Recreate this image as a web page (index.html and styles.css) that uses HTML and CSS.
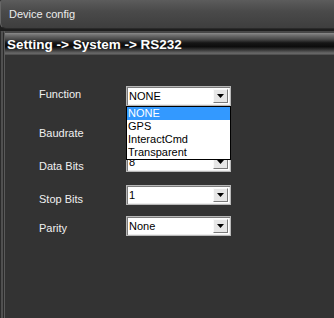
FILE: index.html
```html
<!DOCTYPE html>
<html>
<head>
<meta charset="utf-8">
<link rel="stylesheet" href="styles.css">
</head>
<body>
<div class="window">
  <div class="titlebar">Device config</div>
  <div class="gap"></div>
  <div class="frame">
    <div class="crumb">Setting -&gt; System -&gt; RS232</div>
    <div class="form">
      <div class="row">
        <span class="lbl lbl-first">Function</span>
        <div class="combo-wrap">
          <div class="combo"><span class="val">NONE</span><span class="btn"><svg width="7" height="4" viewBox="0 0 7 4"><path d="M0 0h7L3.5 4z" fill="#000"/></svg></span></div>
          <ul class="dropdown">
            <li class="sel">NONE</li>
            <li>GPS</li>
            <li>InteractCmd</li>
            <li>Transparent</li>
          </ul>
        </div>
      </div>
      <div class="row">
        <span class="lbl">Baudrate</span>
        <div class="combo-wrap">
          <div class="combo"><span class="val"></span><span class="btn"><svg width="7" height="4" viewBox="0 0 7 4"><path d="M0 0h7L3.5 4z" fill="#000"/></svg></span></div>
        </div>
      </div>
      <div class="row">
        <span class="lbl">Data Bits</span>
        <div class="combo-wrap">
          <div class="combo"><span class="val">8</span><span class="btn"><svg width="7" height="4" viewBox="0 0 7 4"><path d="M0 0h7L3.5 4z" fill="#000"/></svg></span></div>
        </div>
      </div>
      <div class="row">
        <span class="lbl">Stop Bits</span>
        <div class="combo-wrap">
          <div class="combo"><span class="val">1</span><span class="btn"><svg width="7" height="4" viewBox="0 0 7 4"><path d="M0 0h7L3.5 4z" fill="#000"/></svg></span></div>
        </div>
      </div>
      <div class="row row-last">
        <span class="lbl lbl-last">Parity</span>
        <div class="combo-wrap">
          <div class="combo"><span class="val">None</span><span class="btn"><svg width="7" height="4" viewBox="0 0 7 4"><path d="M0 0h7L3.5 4z" fill="#000"/></svg></span></div>
        </div>
      </div>
    </div>
  </div>
</div>
</body>
</html>
```
FILE: styles.css
```css
html, body {
  margin: 0;
  padding: 0;
  background: #1e1e1e;
  font-family: "Liberation Sans", Arial, sans-serif;
}
.window {
  width: 334px;
  height: 318px;
  display: flex;
  flex-direction: column;
  overflow: hidden;
}
.titlebar {
  height: 29px;
  box-sizing: border-box;
  padding: 8px 0 0 8px;
  font-size: 11px;
  line-height: 13px;
  color: #ececec;
  background: linear-gradient(#5c5c5c 0%, #4a4a4a 40%, #3e3e3e 100%);
  border-left: 1px solid #666;
  border-bottom: 1px solid #2a2a2a;
  border-radius: 2px 0 0 6px;
}
.gap {
  height: 2px;
  background: #1e1e1e;
}
.frame {
  flex: 1;
  background: #333;
  border-top: 2px solid #474747;
  border-left: 5px solid #2b2b2b;
  position: relative;
  display: flex;
  flex-direction: column;
}
.frame::before {
  content: "";
  position: absolute;
  left: -4px;
  top: -2px;
  bottom: 0;
  width: 2px;
  background: #505050;
}
.frame::after {
  content: "";
  position: absolute;
  left: -1px;
  top: -2px;
  bottom: 0;
  width: 1px;
  background: #5a5a5a;
}
.crumb {
  height: 22px;
  box-sizing: border-box;
  padding: 4px 0 0 2px;
  font-size: 13.5px;
  line-height: 15px;
  font-weight: bold;
  color: #fff;
  background: linear-gradient(#8a8a8a 0%, #6a6a6a 12%, #4a4a4a 28%, #161616 45%, #0c0c0c 62%, #3a3a3a 78%, #6a6a6a 92%, #474747 100%);
}
.form {
  padding: 31px 0 0 34px;
  display: flex;
  flex-direction: column;
  gap: 13px;
}
.row {
  display: flex;
  align-items: flex-start;
  height: 20px;
}
.row.row-last {
  margin-top: -2px;
}
.lbl {
  width: 87px;
  font-size: 11px;
  line-height: 13px;
  color: #f0f0f0;
  padding-top: 8px;
}
.lbl.lbl-first {
  padding-top: 2px;
}
.lbl.lbl-last {
  padding-top: 6px;
}
.combo-wrap {
  position: relative;
}
.combo {
  width: 105px;
  height: 20px;
  box-sizing: border-box;
  background: #fff;
  border: 1px solid #b8b8b8;
  box-shadow: inset 1px 1px 0 #7c7c7c, inset -1px -1px 0 #ececec;
  display: flex;
  align-items: center;
  padding: 0 2px 0 2px;
}
.val {
  font-size: 11px;
  line-height: 13px;
  color: #000;
}
.btn {
  margin-left: auto;
  width: 15px;
  height: 14px;
  box-sizing: border-box;
  background: #e6e6e6;
  border: 1px solid;
  border-color: #fafafa #7a7a7a #7a7a7a #fafafa;
  display: flex;
  align-items: center;
  justify-content: center;
}
.btn svg {
  display: block;
}
.dropdown {
  position: absolute;
  left: 0;
  top: 20px;
  width: 105px;
  box-sizing: border-box;
  margin: 0;
  padding: 0;
  list-style: none;
  background: #fff;
  border: 1px solid #000;
  z-index: 2;
}
.dropdown li {
  height: 13px;
  font-size: 11px;
  line-height: 13px;
  padding-left: 1px;
  color: #000;
}
.dropdown li.sel {
  background: #3399ff;
  color: #fff;
}
```
